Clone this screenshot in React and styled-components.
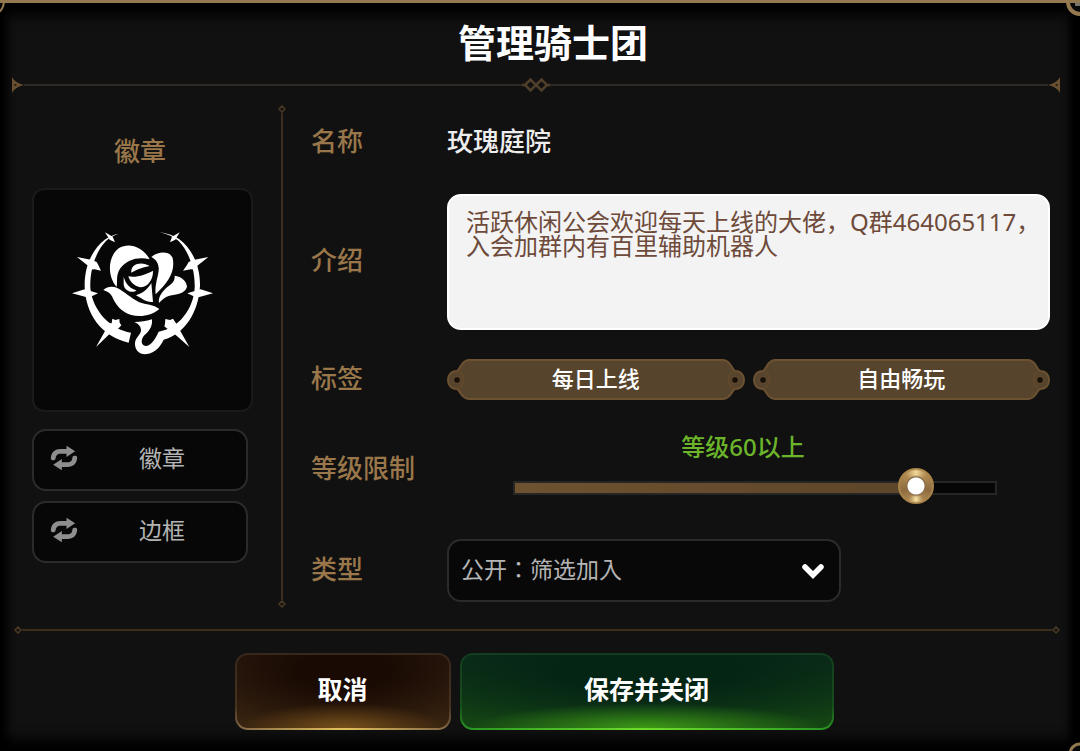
import React, { useState } from "react";
import styled, { createGlobalStyle, css } from "styled-components";

const GlobalStyle = createGlobalStyle`
  *, *::before, *::after { box-sizing: border-box; }
  body {
    margin: 0;
    background: #000;
    font-family: "Noto Sans", "Noto Sans CJK SC", sans-serif;
    color: #f2f2f2;
  }
  button, input, select, textarea { font: inherit; margin: 0; }
`;

const gold = "#9a774a";
const line = "#4a3a25";

const Dialog = styled.main`
  position: relative;
  overflow: hidden;
  min-height: 100vh;
  display: flex;
  flex-direction: column;
  border-top: 3px solid #947950;
  background: #111;
  box-shadow: inset 0 16px 14px -4px #000, inset 0 -16px 14px -4px #000,
    inset 10px 0 10px -4px #000, inset -14px 0 10px -4px #000;
`;

const Corner = styled.svg`
  position: absolute;
  width: 16px;
  height: 16px;
  fill: none;
  stroke: #947950;
  stroke-width: 4;
  ${(p) => (p.$side === "left" ? css`left: 0;` : css`right: 0;`)}
  ${(p) => (p.$edge === "top" ? css`top: -3px;` : css`bottom: -3px;`)}
`;

const Title = styled.h1`
  margin: 0;
  padding: 19px 0 15px 26px;
  font-size: 38px;
  line-height: 40px;
  font-weight: 700;
  text-align: center;
  color: #fff;
`;

const RuleRow = styled.div`
  display: flex;
  align-items: center;
  height: 16px;
  margin: ${(p) => (p.$bottom ? "0 20px 0 14px" : "0 20px 0 12px")};
  svg { flex: none; display: block; }
`;

const Line = styled.span`
  flex: 1;
  height: 2px;
  background: ${(p) => (p.$warm ? "#3c2e1b" : "#2e2925")};
`;

const Body = styled.form`
  flex: 1;
  display: grid;
  grid-template-columns: 221px 8px minmax(0, 1fr);
  column-gap: 25px;
  padding: 0 30px 0 32px;
`;

const EmblemPanel = styled.section`
  padding: 38px 0 40px;
`;

const EmblemHeading = styled.h2`
  width: 216px;
  margin: 0 0 17px;
  font-size: 26px;
  line-height: 40px;
  font-weight: 500;
  text-align: center;
  color: ${gold};
`;

const EmblemFrame = styled.div`
  display: flex;
  align-items: center;
  justify-content: center;
  height: 224px;
  margin-bottom: 17px;
  padding-bottom: 14px;
  border: 2px solid #1a1a1a;
  border-radius: 12px;
  background: #070707;
`;

const SwapButton = styled.button`
  display: flex;
  align-items: center;
  width: 216px;
  height: 62px;
  margin-bottom: 10px;
  padding: 0 16px 4px;
  border: 2px solid #2b2b2b;
  border-radius: 14px;
  background: #070707;
  color: #b4b4b4;
  font-size: 23px;
  line-height: 32px;
  cursor: pointer;
  svg { flex: none; }
  span { flex: 1; padding-left: 16px; text-align: center; }
`;

const Divider = styled.div`
  display: flex;
  flex-direction: column;
  align-items: center;
  margin: 12px 0 14px;
  &::before {
    content: "";
    order: 2;
    flex: 1;
    width: 2px;
    background: #3c2f1d;
  }
  svg { display: block; }
  svg:last-child { order: 3; }
`;

const Fields = styled.div`
  display: flex;
  flex-direction: column;
  gap: 29px;
  padding: 28px 0 20px;
`;

const Field = styled.div`
  display: grid;
  grid-template-columns: 136px minmax(0, 1fr);
  align-items: center;
  min-height: ${(p) => p.$height}px;
`;

const labelStyle = css`
  padding-bottom: 4px;
  font-size: 26px;
  line-height: 36px;
  font-weight: 500;
  color: ${gold};
`;
const Label = styled.label`${labelStyle}`;
const Caption = styled.span`${labelStyle}`;

const NameValue = styled.output`
  padding-bottom: 4px;
  font-size: 26px;
  line-height: 36px;
  font-weight: 500;
  color: #ededed;
`;

const Intro = styled.textarea`
  display: block;
  width: 100%;
  height: 136px;
  padding: 14px 0 14px 17px;
  border: 2px solid #fff;
  border-radius: 14px;
  background: #f3f3f3;
  color: #6d4a3a;
  font-size: 24px;
  line-height: 24px;
  resize: none;
  outline: none;
  overflow: hidden;
`;

const Tags = styled.div`
  display: grid;
  grid-template-columns: 1fr 1fr;
  gap: 8px;
`;

const TagButton = styled.button`
  display: flex;
  height: 41px;
  padding: 0;
  border: 0;
  background: none;
  color: #fff;
  font-size: 22px;
  line-height: 34px;
  font-weight: 500;
  cursor: pointer;
  svg { flex: none; display: block; }
  svg:last-child { transform: scaleX(-1); }
  span {
    flex: 1;
    height: 41px;
    border: solid #6d5232;
    border-width: 2px 0;
    background: #57442d;
  }
`;

const Level = styled.div`
  display: flex;
  flex-direction: column;
  align-items: center;
  gap: 9px;
  padding: 0 53px 0 66px;
`;

const LevelText = styled.output`
  padding-right: 24px;
  font-size: 24px;
  line-height: 28px;
  font-weight: 500;
  color: #6cb52b;
`;

const Slider = styled.input`
  appearance: none;
  display: block;
  width: 100%;
  height: 36px;
  background: none;
  cursor: pointer;
  &::-webkit-slider-runnable-track {
    height: 14px;
    border: 2px solid #262626;
    background: linear-gradient(90deg, #6f5230, #5d4529) left / var(--fill) 100% no-repeat, #060606;
  }
  &::-webkit-slider-thumb {
    appearance: none;
    width: 36px;
    height: 36px;
    margin-top: -15px;
    border-radius: 50%;
    background:
      radial-gradient(circle, #fff 0 8px, #8a6d4a 9px, transparent 11px),
      radial-gradient(circle, transparent 0 15px, #a98349 17px),
      conic-gradient(#f1d99a, #b08b52 12%, #8d6b3f 30%, #a98552 42%, #f5e0a2 50%, #a98552 58%, #8d6b3f 70%, #b08b52 88%, #f1d99a);
  }
`;

const SelectWrap = styled.div`
  position: relative;
  width: 394px;
  max-width: 100%;
  svg {
    position: absolute;
    right: 16px;
    top: 24px;
    pointer-events: none;
  }
`;

const Select = styled.select`
  appearance: none;
  display: block;
  width: 100%;
  height: 63px;
  padding: 0 48px 5px 12px;
  border: 2px solid #2b2b2b;
  border-radius: 14px;
  background: #080808;
  color: #b4b4b4;
  font-family: "Noto Sans CJK JP", sans-serif;
  font-size: 23px;
  outline: none;
`;

const Footer = styled.footer`
  display: flex;
  justify-content: center;
  gap: 9px;
  padding: 15px 12px 21px 0;
`;

const ActionButton = styled.button`
  width: ${(p) => (p.$primary ? 374 : 216)}px;
  height: 77px;
  padding: 0 0 6px;
  border: 2px solid transparent;
  border-radius: 13px;
  color: #fff;
  font-size: 25px;
  line-height: 36px;
  font-weight: 700;
  cursor: pointer;
  ${(p) =>
    p.$primary
      ? css`
          background:
            radial-gradient(ellipse 48% 34% at 50% 100%, #3c9816, transparent) padding-box,
            radial-gradient(ellipse 72% 90% at 50% 20%, #042414 30%, transparent) padding-box,
            linear-gradient(#0e2f1a, #144513) padding-box,
            radial-gradient(ellipse 50% 30% at 50% 100%, #70e02c, transparent) border-box,
            linear-gradient(#123d1e, #174f1b 70%, #289823) border-box;
        `
      : css`
          background:
            radial-gradient(ellipse 48% 34% at 50% 100%, #76501a, transparent) padding-box,
            radial-gradient(ellipse 72% 90% at 50% 20%, #190a03 30%, transparent) padding-box,
            linear-gradient(#2c1c11, #38230f) padding-box,
            radial-gradient(ellipse 50% 30% at 50% 100%, #e5c35e, transparent) border-box,
            linear-gradient(#39271c, #46321f 70%, #836848) border-box;
        `}
`;

const TopRuleEnd = ({ flip }) => (
  <svg width="12" height="16" viewBox="0 0 12 16">
    <path
      d="M0 0C2 4 6 6.500 12 8C6 9.500 2 12 0 16Z M2.500 6.800V9.200L5 8Z"
      fill="#6a5030"
      fillRule="evenodd"
      transform={flip ? "translate(12 0) scale(-1 1)" : undefined}
    />
  </svg>
);

const SmallStud = () => (
  <svg width="8" height="8" viewBox="0 0 8 8">
    <path d="M4 1L7 4L4 7L1 4Z" fill="none" stroke={line} strokeWidth="1.500" />
  </svg>
);

const TwinDiamonds = () => (
  <svg width="28" height="16" viewBox="0 0 28 16" fill="none" stroke="#4f3e2a" strokeWidth="2.500">
    <path d="M0 8H3M25 8H28M3 8L8.500 2.500L14 8L8.500 13.500Z M14 8L19.500 2.500L25 8L19.500 13.500Z" />
  </svg>
);

const SwapIcon = () => (
  <svg width="28" height="26" viewBox="90 76 83 78">
    <g fill="#8e8e8e">
      <path d="M92 118C92 98 104 88 121 88H139V78L165 95L139 112V102H122C110 102 107 108 106 118C104 123 94 123 92 118Z" />
      <path d="M171 112C171 132 159 142 142 142H125V152L99 135L125 118V128H141C153 128 156 122 157 112C159 107 169 107 171 112Z" />
    </g>
  </svg>
);

const RoseEmblem = () => (
  <svg width="147" height="130" viewBox="119 145 441 390" fill="#fff" role="img" aria-label="玫瑰">
    <path d="M268 162C250 166 238 172 228 179C187 210 165 262 166 320C168 402 215 471 298 489L305 459C245 450 190 395 183 325C181 268 200 215 230 184C240 174 252 168 268 162Z" />
    <path d="M143 232L188 241L202 247L207 256L215 273L196 269L178 270L176 258Z" />
    <path d="M128 341L166 329L206 341L178 354Z" />
    <path d="M200 502L230 449L232 431L247 431L249 417L258 421L270 418L271 429L276 437L268 446L250 454Z" />
    <path d="M227 158L250 171L257 188L241 180Z" />
    <path d="M390 157C415 161 434 168 450 179C491 210 513 262 512 318C508 395 468 462 403 480C393 500 380 518 354 523C330 526 316 512 317 490C319 472 335 465 335 452C335 440 328 433 315 427C335 427 350 425 368 419C370 443 358 455 345 467C333 481 335 498 349 499C365 498 377 480 388 456C448 446 492 389 496 325C498 268 478 215 448 184C434 172 415 163 390 157Z" />
    <path d="M451 158L428 171L422 188L438 180Z M537 232L492 241L478 247L473 256L461 273L484 269L502 270L504 258Z M551 341L514 329L474 341L502 354Z M480 502L450 449L440 431L431 417L422 421L408 418L407 432L405 440L412 446L430 458Z" />
    <path d="M262 322C234 290 234 232 268 206C303 184 344 207 361 239C329 230 293 238 273 266C259 286 265 304 262 322Z" />
    <path d="M222 331C234 320 250 319 264 325C286 337 304 354 330 368C350 376 372 374 390 388C370 406 335 414 306 406C276 398 258 375 248 350C243 341 235 335 222 331Z" />
    <path d="M366 232C385 215 421 213 430 235C438 275 419 306 379 344C375 312 390 284 388 264C386 246 377 238 366 232Z" />
    <path d="M436 288C456 290 472 304 473 321C467 343 440 344 420 348C406 352 398 360 389 370C386 350 401 334 414 322C429 312 437 303 436 288Z" />
    <path d="M306 279C303 251 338 244 361 259C343 263 329 266 306 279Z M297 290C321 295 350 284 371 273C372 299 356 323 332 323C314 319 302 306 297 290Z M283 292C290 314 302 327 321 332C311 343 285 333 283 315Z M320 347C342 340 356 327 366 310L371 367C351 370 335 354 320 347Z" />
  </svg>
);

const TagCap = () => (
  <svg width="26" height="41" viewBox="0 0 26 41">
    <path
      d="M26 1H22C14 1 13 11 10 12C4 12 1 16 1 21C1 26 4 30 10 30C13 31 14 40 22 40H26"
      fill="#57442d"
      stroke="#6d5232"
      strokeWidth="2"
    />
    <path d="M12 13C18 15 18 27 11 29" fill="none" stroke="#63492d" strokeWidth="1.500" />
    <circle cx="10" cy="21" r="3.500" fill="#171009" stroke="#6d5032" />
  </svg>
);

const Tag = ({ children }) => (
  <TagButton type="button">
    <TagCap />
    <span>{children}</span>
    <TagCap />
  </TagButton>
);

const MIN_LEVEL = 10;
const MAX_LEVEL = 68;

export default function App() {
  const [level, setLevel] = useState(60);
  const fill = ((level - MIN_LEVEL) / (MAX_LEVEL - MIN_LEVEL)) * 92 + 4;

  return (
    <>
      <GlobalStyle />
      <Dialog lang="zh-CN">
        <Corner $side="left" $edge="top" viewBox="0 0 16 16" aria-hidden="true">
          <path d="M4 0C4 6 3 9 -1 12" strokeWidth="2" />
        </Corner>
        <Corner $side="right" $edge="top" viewBox="0 0 16 16" aria-hidden="true">
          <circle cx="16" cy="2" r="12" fill="#080808" />
          <path d="M11 4H16" stroke="#77736c" />
        </Corner>
        <Corner $side="right" $edge="bottom" viewBox="0 0 16 16" aria-hidden="true">
          <circle cx="16" cy="16" r="10" fill="#080808" strokeWidth="3" />
        </Corner>

        <Title>管理骑士团</Title>
        <RuleRow aria-hidden="true">
          <TopRuleEnd />
          <Line />
          <TwinDiamonds />
          <Line />
          <TopRuleEnd flip />
        </RuleRow>

        <Body id="guild-form" onSubmit={(e) => e.preventDefault()}>
          <EmblemPanel>
            <EmblemHeading>徽章</EmblemHeading>
            <EmblemFrame>
              <RoseEmblem />
            </EmblemFrame>
            <SwapButton type="button">
              <SwapIcon />
              <span>徽章</span>
            </SwapButton>
            <SwapButton type="button">
              <SwapIcon />
              <span>边框</span>
            </SwapButton>
          </EmblemPanel>

          <Divider aria-hidden="true">
            <SmallStud />
            <SmallStud />
          </Divider>

          <Fields>
            <Field $height={44}>
              <Label htmlFor="guild-name">名称</Label>
              <NameValue id="guild-name">玫瑰庭院</NameValue>
            </Field>
            <Field $height={136}>
              <Label htmlFor="guild-intro">介绍</Label>
              <Intro
                id="guild-intro"
                spellCheck={false}
                defaultValue="活跃休闲公会欢迎每天上线的大佬，Q群464065117，入会加群内有百里辅助机器人"
              />
            </Field>
            <Field $height={41} role="group" aria-labelledby="guild-tags">
              <Caption id="guild-tags">标签</Caption>
              <Tags>
                <Tag>每日上线</Tag>
                <Tag>自由畅玩</Tag>
              </Tags>
            </Field>
            <Field $height={81}>
              <Label htmlFor="guild-level">等级限制</Label>
              <Level>
                <LevelText htmlFor="guild-level">等级{level}以上</LevelText>
                <Slider
                  id="guild-level"
                  type="range"
                  min={MIN_LEVEL}
                  max={MAX_LEVEL}
                  value={level}
                  onChange={(e) => setLevel(Number(e.target.value))}
                  style={{ "--fill": `${fill}%` }}
                />
              </Level>
            </Field>
            <Field $height={63}>
              <Label htmlFor="guild-type">类型</Label>
              <SelectWrap>
                <Select id="guild-type" lang="ja" defaultValue="screened">
                  <option value="screened">公开：筛选加入</option>
                </Select>
                <svg width="24" height="17" viewBox="0 0 24 17" aria-hidden="true">
                  <path d="M4 4L12 12L20 4" fill="none" stroke="#fff" strokeWidth="5.500" strokeLinecap="round" />
                </svg>
              </SelectWrap>
            </Field>
          </Fields>
        </Body>

        <RuleRow $bottom aria-hidden="true">
          <SmallStud />
          <Line $warm />
          <SmallStud />
        </RuleRow>
        <Footer>
          <ActionButton type="button">取消</ActionButton>
          <ActionButton type="submit" form="guild-form" $primary>
            保存并关闭
          </ActionButton>
        </Footer>
      </Dialog>
    </>
  );
}
